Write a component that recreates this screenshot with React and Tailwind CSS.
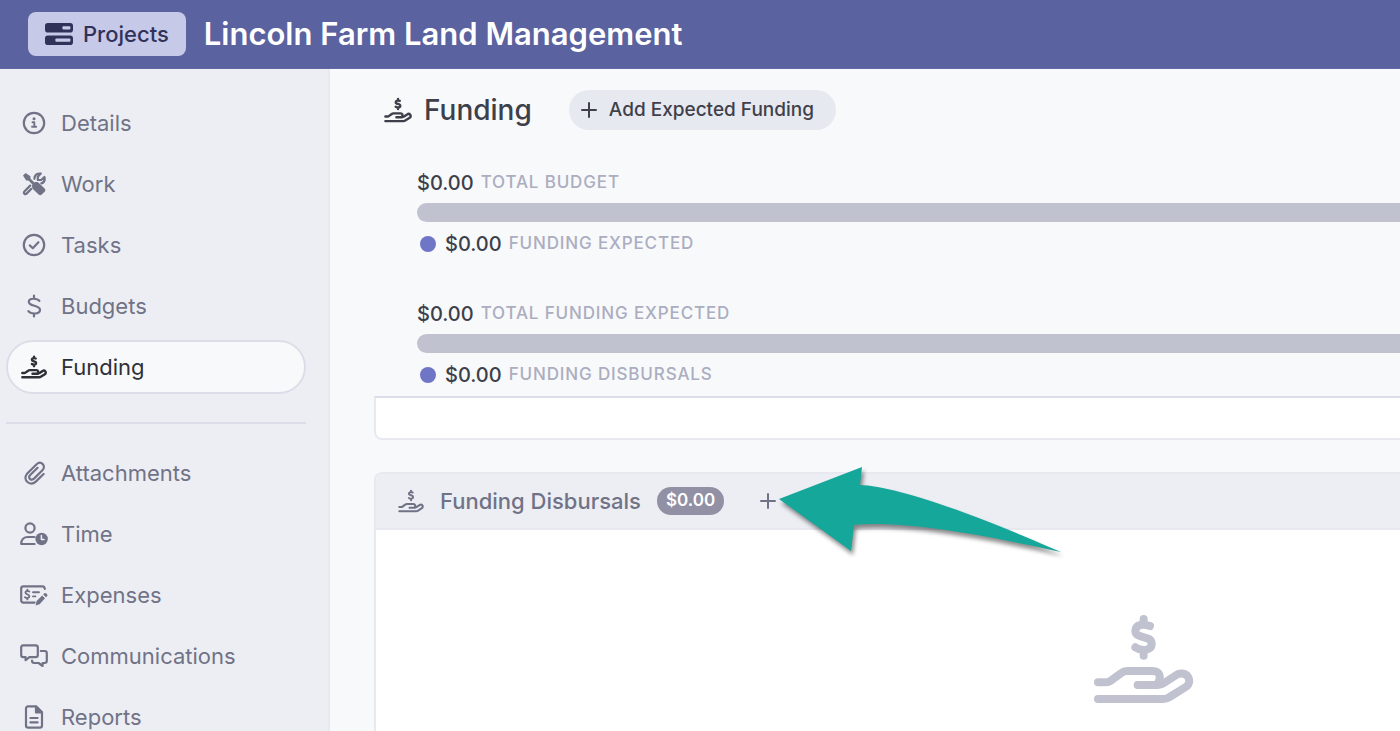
import React from 'react';

const HandDollar = ({ className, strokeWidth = 24 }) => (
  <svg
    viewBox="72 42 303 270"
    className={className}
    fill="none"
    stroke="currentColor"
    strokeWidth={strokeWidth}
    strokeLinecap="round"
    strokeLinejoin="round"
    aria-hidden="true"
  >
    <path d="M243 78C225 71 199 72 199 93C199 118 248 104 248 131C248 155 216 153 199 142M224 57V70M224 152V167" />
    <path d="M87 247H112C117 247 120 246 124 243L156 220C162 215 167 213 174 213H252C272 213 278 232 267 250" />
    <path d="M206 255H267C274 255 280 253 285 249L322 225C332 218 348 219 356 229C364 240 361 254 350 261L302 291C295 296 290 297 283 297H87" />
  </svg>
);

const Stroke = ({ children, viewBox = '0 0 24 24', className = 'size-6' }) => (
  <svg
    viewBox={viewBox}
    className={className}
    fill="none"
    stroke="currentColor"
    strokeWidth="2.2"
    strokeLinecap="round"
    strokeLinejoin="round"
    aria-hidden="true"
  >
    {children}
  </svg>
);

const InfoIcon = () => (
  <Stroke>
    <circle cx="12" cy="12" r="10.2" />
    <path d="M10.5 11.2H12.3V15.6M10 15.8H14.2" strokeWidth="1.9" />
    <circle cx="12" cy="7.8" r="1.5" fill="currentColor" stroke="none" />
  </Stroke>
);

const ToolsIcon = () => (
  <Stroke>
    <path d="M1 3.6L3.6 1L8.4 4.2V6.6L12.4 10.4C14 9.7 16 10 17.4 11.4L22.6 16.6C23.6 17.6 23.6 18.8 22.6 19.8L19.8 22.6C18.8 23.6 17.6 23.6 16.6 22.6L11.4 17.4C10 16 9.6 14 10.4 12.4L6.5 8.4H4.2Z" fill="currentColor" stroke="none" />
    <path d="M8.2 13.6L2.6 19.2C.8 21 3 23.2 4.8 21.4L9.4 16.8M12.4 6.8C12.4 3.4 15 1 18.8 1.6L15.8 4.8V8H19.2L22.4 5C23.2 8.2 21.8 10.6 19.4 11.4" />
  </Stroke>
);

const CheckIcon = () => (
  <Stroke>
    <circle cx="12" cy="12" r="10.2" />
    <path d="M7.8 12.4L10.8 15.2L16.4 9.2" />
  </Stroke>
);

const DollarIcon = () => (
  <Stroke>
    <path d="M17.4 6.8C15.8 4.6 7 3.2 6.8 7.8C6.6 13 18.2 10.6 18 16C17.8 20.8 8.6 20.2 6.4 17.2M12 1.6V4.4M12 19.6V22.4" />
  </Stroke>
);

const ClipIcon = () => (
  <Stroke>
    <path d="M21.6 13L13.8 20.6C8 26 .2 19 5 12.8L14.6 3.2C19 -.8 24.6 5 20.4 9.2L12 17.6C8.8 20.4 5.6 16.8 8.2 14L15.6 6.8" />
  </Stroke>
);

const UserClockIcon = () => (
  <Stroke viewBox="0 0 28 24" className="h-6 w-7">
    <circle cx="10" cy="6" r="4.6" />
    <path d="M14.6 22H1.2C1.2 17.6 4 15 8 15H14.4" />
    <circle cx="21.6" cy="17" r="6.2" fill="currentColor" stroke="none" />
    <path d="M21.4 13.6V17.4H24" className="stroke-[#edeef4]" strokeWidth="1.5" />
  </Stroke>
);

const CheckPenIcon = () => (
  <Stroke viewBox="0 0 28 24" className="h-6 w-7">
    <path d="M14.6 19.6H3.4C2 19.6 1.2 18.8 1.2 17.4V5.6C1.2 4.2 2 3.4 3.4 3.4H22.4C23.8 3.4 24.6 4.2 24.8 5.8" />
    <path d="M9.4 8.6C8 7.4 5.4 7.8 5.4 9.6C5.4 11.8 9.4 11 9.4 13.2C9.4 15.2 6.4 15.4 5 14.2M7.4 6.8V8M7.4 15.2V16.4M13 9.2H19M13 13.4H15.4" strokeWidth="1.9" />
    <path d="M15.6 22.6L16.6 18L22.2 12.4L25 15.2L19.6 21.2ZM23.2 11.4L24.4 10.2C25.6 9.2 28.4 11.8 27.2 13L26 14.2Z" fill="currentColor" stroke="none" />
  </Stroke>
);

const CommentsIcon = () => (
  <Stroke viewBox="0 0 28 24" className="h-6 w-7">
    <path d="M3.2 1.4H15.6C17 1.4 17.8 2.2 17.8 3.6V11C17.8 12.4 17 13.2 15.6 13.2H9.4L5.6 16.2V13.2H3.2C1.8 13.2 1.2 12.4 1.2 11V3.6C1.2 2.2 1.8 1.4 3.2 1.4Z" />
    <path d="M20.8 7H24.6C26 7 26.8 7.8 26.8 9.2V16.8C26.8 18.2 26 19 24.6 19H22.6V22L18.6 19H14.2C12.8 19 12 18.2 12 16.6" />
  </Stroke>
);

const FileIcon = () => (
  <Stroke>
    <path d="M6.2 1.4H14.2L20 7.2V20.4C20 21.8 19.2 22.6 17.8 22.6H6.2C4.8 22.6 4 21.8 4 20.4V3.6C4 2.2 4.8 1.4 6.2 1.4Z" />
    <path d="M14 2V7.4H19.6Z" fill="currentColor" />
    <path d="M8.4 13H15.6M8.4 17.4H15.6" />
  </Stroke>
);

const PlusIcon = () => (
  <Stroke viewBox="0 0 16 16" className="size-4">
    <path d="M8 1V15M1 8H15" strokeWidth="2" />
  </Stroke>
);

const ProjectsIcon = () => (
  <svg viewBox="0 0 30 24" className="h-6 w-[30px]" aria-hidden="true">
    <rect x="1" y="1" width="28" height="9.6" rx="2.8" fill="currentColor" />
    <rect x="1" y="13.4" width="28" height="9.6" rx="2.8" fill="currentColor" />
    <rect x="18.4" y="4.2" width="8" height="3.2" rx=".8" className="fill-[#c7c9e8]" />
    <rect x="11.4" y="16.6" width="15" height="3.2" rx=".8" className="fill-[#c7c9e8]" />
  </svg>
);

const mainLinks = [
  { label: 'Details', icon: <InfoIcon /> },
  { label: 'Work', icon: <ToolsIcon /> },
  { label: 'Tasks', icon: <CheckIcon /> },
  { label: 'Budgets', icon: <DollarIcon /> },
  { label: 'Funding', icon: <HandDollar className="h-6 w-[26px]" strokeWidth={28} />, active: true },
];

const moreLinks = [
  { label: 'Attachments', icon: <ClipIcon /> },
  { label: 'Time', icon: <UserClockIcon /> },
  { label: 'Expenses', icon: <CheckPenIcon /> },
  { label: 'Communications', icon: <CommentsIcon /> },
  { label: 'Reports', icon: <FileIcon /> },
];

function NavList({ links }) {
  return (
    <ul className="flex flex-col gap-[7px]">
      {links.map((link) => (
        <li key={link.label}>
          <a
            href="#"
            aria-current={link.active ? 'page' : undefined}
            className={`flex h-[54px] items-center gap-3 rounded-full border-2 pl-[11px] text-[22px] ${
              link.active
                ? 'border-[#dddde9] bg-[#f8f9fb] text-[#2f3037]'
                : 'border-transparent text-[#707386]'
            }`}
          >
            <span className="flex w-[30px] justify-center">{link.icon}</span>
            {link.label}
          </a>
        </li>
      ))}
    </ul>
  );
}

function Meter({ total, part }) {
  return (
    <div>
      <p className="flex h-7 items-center gap-[7px]">
        <span className="text-xl font-medium text-[#3d3f4a]">$0.00</span>
        <span className="text-[17px] font-medium tracking-wider text-[#abadc0] uppercase">{total}</span>
      </p>
      <div className="mt-[6px] h-[19px] rounded-full bg-[#c1c2d0]" />
      <p className="mt-2 flex h-7 items-center gap-[7px] pl-[3px]">
        <span className="size-4 rounded-full bg-[#7076c6]" />
        <span className="ml-[2px] text-xl font-medium text-[#3d3f4a]">$0.00</span>
        <span className="text-[17px] font-medium tracking-wider text-[#abadc0] uppercase">{part}</span>
      </p>
    </div>
  );
}

const Arrow = () => (
  <svg
    viewBox="0 0 300 100"
    className="pointer-events-none absolute -top-[30px] left-[18px] w-[300px] drop-shadow-[2px_4px_2px_rgba(0,0,0,0.45)]"
    aria-hidden="true"
  >
    <path d="M1 36L84 4L82 22C112 23 176 42 283 89C214 74 130 57 76 62L73 88Z" fill="#16a79b" />
  </svg>
);

export default function App() {
  return (
    <div className="flex h-screen flex-col overflow-hidden bg-[#f8f9fb] font-['Inter',sans-serif]">
      <header className="flex h-[69px] shrink-0 items-center gap-[18px] border-b border-[#6268a5] bg-[#5b62a0] pl-7">
        <button className="flex h-11 items-center gap-[9px] rounded-lg bg-[#c7c9e8] pr-[17px] pl-4 text-[22px] font-medium text-[#31325a]">
          <ProjectsIcon />
          Projects
        </button>
        <h1 className="text-[31px] font-semibold text-white">Lincoln Farm Land Management</h1>
      </header>

      <div className="flex min-h-0 flex-1">
        <nav className="w-[330px] shrink-0 border-r-2 border-[#e9eaf1] bg-[#edeef4] pt-[27px] pr-[22px] pl-[6px]">
          <NavList links={mainLinks} />
          <hr className="mt-7 mb-[22px] border-t-2 border-[#dddde9]" />
          <NavList links={moreLinks} />
        </nav>

        <main className="min-w-0 flex-1 overflow-hidden pt-5 pl-11">
          <div className="flex h-[42px] items-center pl-[10px]">
            <HandDollar className="h-[26px] w-7 text-[#3d3f4a]" strokeWidth={26} />
            <h2 className="ml-3 text-[28px] font-medium text-[#3d3f4a]">Funding</h2>
            <button className="ml-[37px] flex h-10 items-center gap-3 rounded-full bg-[#e7e9f1] pr-[22px] pl-3 text-[19px] font-medium text-[#3f4049]">
              <PlusIcon />
              Add Expected Funding
            </button>
          </div>

          {/* content runs wider than the pane and is clipped on the right */}
          <div className="w-[150%]">
            <div className="flex flex-col gap-[42px] px-[43px] pt-[38px] pb-[7px]">
              <Meter total="Total Budget" part="Funding Expected" />
              <Meter total="Total Funding Expected" part="Funding Disbursals" />
            </div>
            <div className="h-11 rounded-b-lg border-2 border-[#e8e9f0] border-t-[#dddde9] bg-white" />

            <section className="mt-8 rounded-t-lg border-2 border-[#e8e9f0] bg-white">
              <div className="flex h-14 items-center rounded-t-md border-b-2 border-[#e8e9f0] bg-[#edeef4] pl-[22px] text-[#707386]">
                <HandDollar className="h-6 w-[26px]" />
                <h3 className="ml-4 text-[22px] font-medium">Funding Disbursals</h3>
                <span className="ml-4 flex h-7 items-center rounded-full bg-[#9190a5] px-[9px] text-[17px] font-semibold text-white">
                  $0.00
                </span>
                <div className="relative ml-9 flex">
                  <button aria-label="Add disbursal">
                    <PlusIcon />
                  </button>
                  <Arrow />
                </div>
              </div>
              <div className="flex h-80 justify-center pt-[84px]">
                <HandDollar className="h-[90px] w-[101px] text-[#c1c2d0]" />
              </div>
            </section>
          </div>
        </main>
      </div>
    </div>
  );
}
